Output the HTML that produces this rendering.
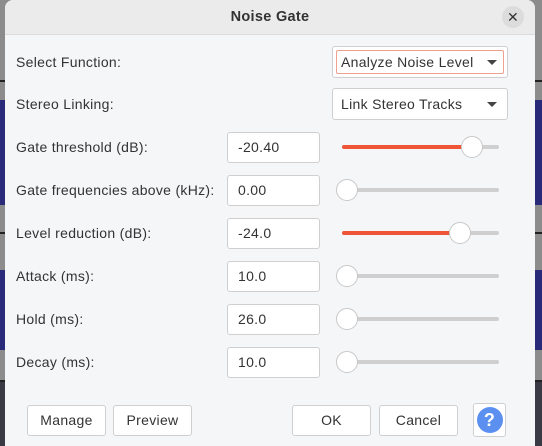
<!DOCTYPE html>
<html><head><style>
body{margin:0;width:542px;height:446px;overflow:hidden;position:relative;background:#8a8a8a;font-family:"Liberation Sans","DejaVu Sans",sans-serif;color:#333;font-size:14px;letter-spacing:0.3px}
.bg{position:absolute;left:0;width:542px}
.dlg{position:absolute;left:5px;top:0;width:530px;height:446px;background:#f5f6f7;border-radius:8px 8px 0 0;overflow:hidden}
.title{position:absolute;left:0;top:0;width:530px;height:34px;background:#ebebeb;border-bottom:1px solid #dcdcdc;text-align:center;line-height:34px;font-weight:bold;font-size:14.5px;color:#333}
.close{position:absolute;left:497px;top:6px;width:22px;height:22px;border-radius:50%;background:#dcdcdc;text-align:center;line-height:22px;font-size:14px;font-weight:normal}
.abs{position:absolute}
.lbl{position:absolute;left:11px;line-height:20px}
.box{position:absolute;left:222px;border:1px solid #cfcfcf;border-radius:3px;background:#fff;line-height:29px;padding-left:10px;box-sizing:border-box;width:93px;height:31px}
.track{position:absolute;left:337px;width:157px;height:4px;border-radius:2px;background:#cfcfcf}
.fill{position:absolute;left:0;top:0;height:4px;border-radius:2px;background:#f05537}
.knob{position:absolute;width:20px;height:20px;border-radius:50%;background:#fff;border:1px solid #c8c8c8;top:-9px;margin-left:-11px}
.dd{position:absolute;left:327px;width:176px;height:32px;border:1px solid #cfcfcf;border-radius:3px;background:#fff;box-sizing:border-box;line-height:30px;padding-left:8px}
.dd:after{content:"";position:absolute;right:10px;top:13px;border-left:5px solid transparent;border-right:5px solid transparent;border-top:5px solid #444}
.btn{position:absolute;top:405px;height:31px;width:79px;border:1px solid #cfcfcf;border-radius:3px;background:#fff;box-sizing:border-box;text-align:center;line-height:29px}
</style></head><body>
<div class="bg" style="top:0;height:446px;background:#8c8c8c"></div>
<div class="bg" style="top:80px;height:2px;background:#222"></div>
<div class="bg" style="top:100px;height:105px;background:#2a2a7a"></div>
<div class="bg" style="top:232px;height:2px;background:#222"></div>
<div class="bg" style="top:270px;height:80px;background:#2a2a7a"></div>
<div class="bg" style="top:380px;height:2px;background:#222"></div>
<div class="bg" style="top:382px;height:64px;background:#3a3a44"></div>
<div class="dlg">
<div class="title">Noise Gate<div class="close">✕</div></div>
<div class="lbl" style="top:52px">Select Function:</div>
<div class="dd" style="top:46px"><div class="abs" style="left:3px;top:3px;right:3px;bottom:3px;border:1px solid #f0a090;border-radius:2px"></div><span style="position:relative">Analyze Noise Level</span></div>
<div class="lbl" style="top:94px">Stereo Linking:</div>
<div class="dd" style="top:88px">Link Stereo Tracks</div>

<div class="lbl" style="top:137px">Gate threshold (dB):</div>
<div class="box" style="top:132px">-20.40</div>
<div class="track" style="top:145px"><div class="fill" style="width:130px"></div><div class="knob" style="left:130px"></div></div>

<div class="lbl" style="top:180px">Gate frequencies above (kHz):</div>
<div class="box" style="top:175px">0.00</div>
<div class="track" style="top:188px"><div class="knob" style="left:5px"></div></div>

<div class="lbl" style="top:223px">Level reduction (dB):</div>
<div class="box" style="top:218px">-24.0</div>
<div class="track" style="top:231px"><div class="fill" style="width:118px"></div><div class="knob" style="left:118px"></div></div>

<div class="lbl" style="top:266px">Attack (ms):</div>
<div class="box" style="top:261px">10.0</div>
<div class="track" style="top:274px"><div class="knob" style="left:5px"></div></div>

<div class="lbl" style="top:309px">Hold (ms):</div>
<div class="box" style="top:304px">26.0</div>
<div class="track" style="top:317px"><div class="knob" style="left:5px"></div></div>

<div class="lbl" style="top:352px">Decay (ms):</div>
<div class="box" style="top:347px">10.0</div>
<div class="track" style="top:360px"><div class="knob" style="left:5px"></div></div>

<div class="btn" style="left:22px">Manage</div>
<div class="btn" style="left:108px">Preview</div>
<div class="btn" style="left:287px">OK</div>
<div class="btn" style="left:374px">Cancel</div>
<div class="btn" style="left:468px;top:403px;width:33px;height:34px;padding-top:3px"><div style="width:26px;height:26px;margin:0 auto;border-radius:50%;background:#5b8ff0;color:#fff;font-weight:bold;font-size:18px;line-height:26px">?</div></div>
</div>
</body></html>
